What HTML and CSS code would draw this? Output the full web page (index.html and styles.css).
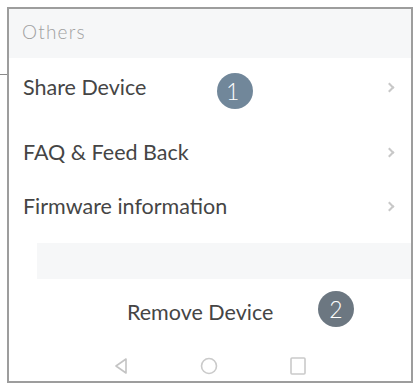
FILE: index.html
```html
<!DOCTYPE html>
<html>
<head>
<meta charset="utf-8">
<link rel="stylesheet" href="styles.css">
</head>
<body>
<div class="frame">
  <div class="section-head">Others</div>
  <div class="row row-1">
    <span class="label">Share Device</span>
    <span class="badge badge-1">1</span>
    <span class="chev"></span>
  </div>
  <div class="row row-2">
    <span class="label">FAQ &amp; Feed Back</span>
    <span class="chev"></span>
  </div>
  <div class="row row-3">
    <span class="label">Firmware information</span>
    <span class="chev"></span>
  </div>
  <div class="gap"></div>
  <div class="band"></div>
  <div class="remove">
    <span class="remove-text">Remove Device</span>
    <span class="badge badge-2">2</span>
  </div>
  <div class="navbar">
    <svg class="nav-icon" width="16" height="18" viewBox="0 0 16 18"><path d="M13 2 L3 9 L13 16 Z" fill="none" stroke="#c4c4c4" stroke-width="1.6" stroke-linejoin="round"/></svg>
    <svg class="nav-icon" width="20" height="20" viewBox="0 0 20 20"><circle cx="10" cy="10" r="7.5" fill="none" stroke="#cacaca" stroke-width="1.6"/></svg>
    <svg class="nav-icon" width="18" height="20" viewBox="0 0 18 20"><rect x="2" y="2" width="14" height="16" rx="1" fill="none" stroke="#cacaca" stroke-width="1.6"/></svg>
  </div>
</div>
</body>
</html>
```

FILE: styles.css
```css
html, body {
  margin: 0;
  padding: 0;
  background: #ffffff;
}
body {
  font-family: Lato, "Open Sans", sans-serif;
  color: #454545;
  width: 418px;
  height: 384px;
  overflow: hidden;
}
.frame {
  position: relative;
  margin: 7px 5px 0 7px;
  height: 372px;
  border: 2px solid #9d9d9d;
  display: flex;
  flex-direction: column;
  background: #ffffff;
}
.frame::before {
  content: "";
  position: absolute;
  left: -9px;
  top: 65px;
  width: 7px;
  height: 1px;
  background: #8a8a8a;
}
.section-head {
  height: 49px;
  background: #f6f7f8;
  color: #a0a0a0;
  font-size: 19px;
  font-weight: 300;
  letter-spacing: 1.2px;
  padding-left: 13px;
  display: flex;
  align-items: center;
  padding-bottom: 5px;
  box-sizing: border-box;
}
.row {
  position: relative;
  display: flex;
  align-items: center;
  justify-content: space-between;
  padding: 0 18px 0 14px;
  font-size: 21.5px;
}
.row-1 { height: 58px; }
.row-2 { height: 72px; }
.row-3 { height: 36px; }
.chev {
  width: 5px;
  height: 5px;
  border-top: 2px solid #c8c8c8;
  border-right: 2px solid #c8c8c8;
  transform: rotate(45deg);
}
.badge {
  position: absolute;
  display: flex;
  align-items: center;
  color: #ffffff;
  border-radius: 50%;
  font-size: 23px;
  font-weight: 300;
}
.badge-1 {
  left: 208px;
  top: 15px;
  width: 36px;
  height: 36px;
  background: #71879a;
  padding-left: 9px;
  box-sizing: border-box;
}
.badge-2 {
  left: 309px;
  top: 12px;
  width: 36px;
  height: 36px;
  background: #6c7781;
  justify-content: center;
}
.gap { height: 19px; }
.band {
  height: 36px;
  margin-left: 28px;
  background: #f6f7f8;
}
.remove {
  position: relative;
  height: 66px;
  display: flex;
  align-items: center;
  padding-left: 118px;
  font-size: 21.5px;
}
.navbar {
  flex: 1;
  display: flex;
  align-items: center;
  padding-left: 104px;
  gap: 70px;
  padding-top: 6px;
}
```
